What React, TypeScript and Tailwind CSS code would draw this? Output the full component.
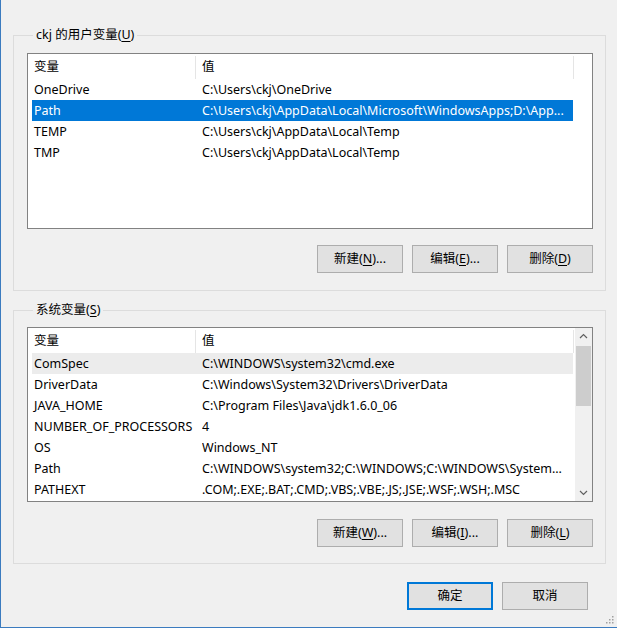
import React from "react";

const FONT = { fontFamily: '"Noto Sans", "Noto Sans CJK SC", sans-serif' };

type Row = { name: string; value: string; state?: "selected" | "hover" };

const userVars: Row[] = [
  { name: "OneDrive", value: "C:\\Users\\ckj\\OneDrive" },
  {
    name: "Path",
    value: "C:\\Users\\ckj\\AppData\\Local\\Microsoft\\WindowsApps;D:\\App...",
    state: "selected",
  },
  { name: "TEMP", value: "C:\\Users\\ckj\\AppData\\Local\\Temp" },
  { name: "TMP", value: "C:\\Users\\ckj\\AppData\\Local\\Temp" },
];

const sysVars: Row[] = [
  { name: "ComSpec", value: "C:\\WINDOWS\\system32\\cmd.exe", state: "hover" },
  { name: "DriverData", value: "C:\\Windows\\System32\\Drivers\\DriverData" },
  { name: "JAVA_HOME", value: "C:\\Program Files\\Java\\jdk1.6.0_06" },
  { name: "NUMBER_OF_PROCESSORS", value: "4" },
  { name: "OS", value: "Windows_NT" },
  { name: "Path", value: "C:\\WINDOWS\\system32;C:\\WINDOWS;C:\\WINDOWS\\System..." },
  { name: "PATHEXT", value: ".COM;.EXE;.BAT;.CMD;.VBS;.VBE;.JS;.JSE;.WSF;.WSH;.MSC" },
];

function Header() {
  return (
    <div className="flex h-[25px] items-center shrink-0">
      <div className="w-[167px] pl-[6px] leading-[25px]">变量</div>
      <div className="w-px h-[23px] bg-[#e5e5e5] self-end" />
      <div className="w-[377px] pl-[6px] leading-[25px]">值</div>
      <div className="w-px h-[23px] bg-[#e5e5e5] self-end" />
    </div>
  );
}

function RowItem({ r }: { r: Row }) {
  const bg =
    r.state === "selected"
      ? "bg-[#0078d7] text-white"
      : r.state === "hover"
      ? "bg-[#ececec] text-black"
      : "text-black";
  return (
    <div className={`ml-[4px] w-[541px] h-[21px] flex leading-[21px] whitespace-nowrap overflow-hidden shrink-0 ${bg}`}>
      <div className="w-[170px] pl-[2px] shrink-0 overflow-hidden">{r.name}</div>
      <div className="flex-1 overflow-hidden">{r.value}</div>
    </div>
  );
}

function Chevron({ up }: { up?: boolean }) {
  return (
    <svg width="17" height="17" viewBox="0 0 17 17">
      <path
        d={up ? "M5 10 L8.5 6.5 L12 10" : "M5 7 L8.5 10.5 L12 7"}
        fill="none"
        stroke="#606060"
        strokeWidth="1.2"
      />
    </svg>
  );
}

function Btn({ label, k, suffix, primary }: { label: string; k?: string; suffix?: string; primary?: boolean }) {
  return (
    <div
      className={`w-[86px] h-[28px] flex items-center justify-center bg-[#e1e1e1] text-black text-[12.5px] ${
        primary ? "border-2 border-[#0078d7]" : "border border-[#adadad]"
      }`}
    >
      <span>
        {label}
        {k !== undefined && (
          <>
            (<span className="underline underline-offset-2">{k}</span>){suffix}
          </>
        )}
      </span>
    </div>
  );
}

export default function App() {
  return (
    <div
      style={FONT}
      className="w-[617px] h-[628px] bg-[#f0f0f0] border-l border-b border-[#3b7bbf] pl-[12px] pt-[26px] text-[12.5px] text-black overflow-hidden relative"
    >
      <fieldset className="w-[592px] border border-[#dcdcdc] pl-[13px] pr-[12px] pt-[9px] pb-[17px]">
        <legend className="ml-[6px] px-[3px] leading-[18px]">
          ckj 的用户变量(<span className="underline underline-offset-2">U</span>)
        </legend>
        <div className="w-[566px] h-[176px] border border-[#828282] bg-white flex flex-col overflow-hidden">
          <Header />
          {userVars.map((r) => (
            <RowItem key={r.name} r={r} />
          ))}
        </div>
        <div className="flex justify-end gap-[9px] mt-[16px]">
          <Btn label="新建" k="N" suffix="..." />
          <Btn label="编辑" k="E" suffix="..." />
          <Btn label="删除" k="D" />
        </div>
      </fieldset>

      <fieldset className="mt-[10px] w-[592px] border border-[#dcdcdc] pl-[13px] pr-[12px] pt-[8px] pb-[16px]">
        <legend className="ml-[6px] px-[3px] leading-[18px]">
          系统变量(<span className="underline underline-offset-2">S</span>)
        </legend>
        <div className="w-[566px] h-[175px] border border-[#828282] bg-white flex overflow-hidden">
          <div className="flex-1 flex flex-col overflow-hidden">
            <Header />
            {sysVars.map((r) => (
              <RowItem key={r.name} r={r} />
            ))}
          </div>
          <div className="w-[17px] bg-[#f0f0f0] flex flex-col shrink-0">
            <Chevron up />
            <div className="mx-[1px] h-[60px] bg-[#cdcdcd] mt-[1px]" />
            <div className="flex-1" />
            <Chevron />
          </div>
        </div>
        <div className="flex justify-end gap-[9px] mt-[17px]">
          <Btn label="新建" k="W" suffix="..." />
          <Btn label="编辑" k="I" suffix="..." />
          <Btn label="删除" k="L" />
        </div>
      </fieldset>

      <div className="flex justify-end gap-[9px] mt-[18px] pr-[29px]">
        <Btn label="确定" primary />
        <Btn label="取消" />
      </div>

      <svg className="absolute right-[3px] bottom-[3px]" width="10" height="10" viewBox="0 0 10 10">
        {[
          [8, 2],
          [8, 5],
          [5, 5],
          [8, 8],
          [5, 8],
          [2, 8],
        ].map(([x, y], i) => (
          <rect key={i} x={x} y={y} width="1.5" height="1.5" fill="#a0a0a0" />
        ))}
      </svg>
    </div>
  );
}
